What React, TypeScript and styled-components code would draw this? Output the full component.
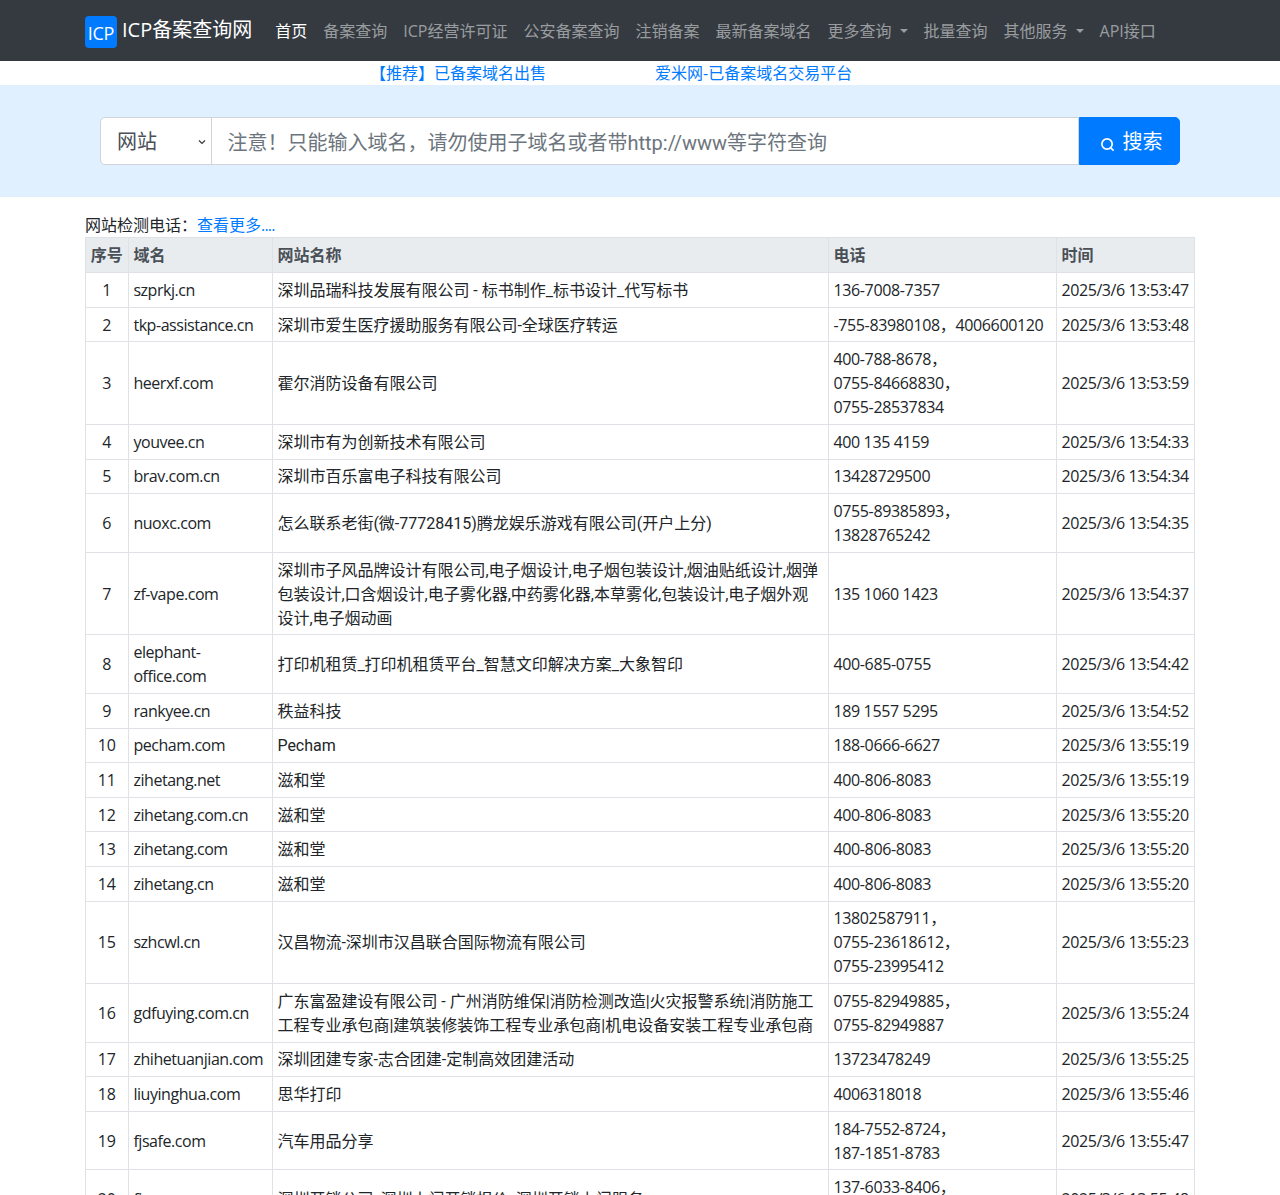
import React from "react";
import styled, { createGlobalStyle } from "styled-components";

const Global = createGlobalStyle`
  html, body { margin: 0; padding: 0; height: 1195px; overflow: hidden; background: #fff; }
  body {
    font-family: "Open Sans", "Noto Sans CJK SC", "Noto Sans", sans-serif;
    font-size: 16px; line-height: 24px; color: #212529;
  }
  * { box-sizing: border-box; }
`;

const NavBar = styled.nav`
  height: 61px; background: #343a40; padding: 0 85px;
  display: flex; align-items: center;
`;
const Brand = styled.a`
  display: flex; align-items: center; color: #fff; font-size: 20px; margin-right: 15px; height: 32px; flex: none; margin-top: 2px;
`;
const Logo = styled.span`
  width: 32px; height: 32px; border-radius: 4px; background: #007bff; color: #fff;
  display: flex; align-items: center; justify-content: center; font-size: 18px; margin-right: 5px; padding-top: 2px; letter-spacing: -0.3px;
`;
const BrandName = styled.span`
  margin-top: -4px;
`;
const NavItem = styled.a<{ $active?: boolean }>`
  padding: 0 8px; white-space: nowrap; flex: none; display: flex; align-items: center;
  color: ${(p) => (p.$active ? "#fff" : "rgba(255,255,255,.5)")};
`;
const Caret = styled.span`
  display: inline-block; margin-left: 8px; width: 0; height: 0;
  border-top: 4.8px solid currentColor; border-left: 4.8px solid transparent; border-right: 4.8px solid transparent;
`;
const Promo = styled.div`
  height: 24px; display: flex; padding-left: 370px; gap: 109px;
`;
const Link = styled.a`
  color: #007bff; text-decoration: none; white-space: nowrap;
`;
const Dots = styled.span`
  letter-spacing: -0.8px;
`;
const Hero = styled.section`
  height: 112px; background: #e0f0ff; padding: 32px 100px;
`;
const SearchGroup = styled.form`
  display: flex; height: 48px; width: 1080px;
`;
const SelectBox = styled.div`
  width: 112px; flex: none; background: #fff; border: 1px solid #ced4da; border-radius: 5px 0 0 5px;
  display: flex; align-items: center; justify-content: space-between; padding: 2px 5px 0 16px;
  font-size: 20px; color: #495057;
`;
const SearchInput = styled.input`
  flex: 1; min-width: 0; margin-left: -1px; border: 1px solid #ced4da; background: #fff; padding: 4px 16px 0 15.5px;
  font-family: Roboto, "Noto Sans CJK SC", sans-serif; font-size: 20px; outline: none;
  &::placeholder { color: #6c757d; opacity: 1; }
`;
const SearchButton = styled.button`
  width: 101px; flex: none; background: #007bff; border: 1px solid #007bff; border-radius: 0 5px 5px 0; color: #fff;
  font: inherit; font-size: 20px; display: flex; align-items: center; justify-content: center; gap: 8px; padding: 2px 0 0 3px;
`;
const Content = styled.main`
  padding: 16px 85px 0;
`;
const Caption = styled.div`
  height: 24px;
`;
const Table = styled.table`
  width: 1109px; table-layout: fixed; border-collapse: collapse;
`;
const Th = styled.th`
  background: #e9ecef; color: #495057; font-weight: 700; text-align: left;
  border: 1px solid #dee2e6; padding: 4.8px 4.8px 5.4px; line-height: 24px;
`;
const Td = styled.td<{ $center?: boolean }>`
  border: 1px solid #dee2e6; padding: 4.8px; vertical-align: middle; line-height: 24px;
  text-align: ${(p) => (p.$center ? "center" : "left")};
`;
const Domain = styled.span`
  letter-spacing: -0.45px;
`;
const SiteName = styled.div`
  font-family: Roboto, "Noto Sans CJK SC", sans-serif;
  padding-top: 1px; margin-bottom: -1px;
`;
const Phone = styled.span`
  white-space: nowrap; letter-spacing: -0.35px;
`;
const Stamp = styled.span`
  white-space: nowrap; letter-spacing: -0.4px;
`;

const rows: [string, string, string, string][] = [
  ["szprkj.cn", "深圳品瑞科技发展有限公司 - 标书制作_标书设计_代写标书", "136-7008-7357", "2025/3/6 13:53:47"],
  ["tkp-assistance.cn", "深圳市爱生医疗援助服务有限公司-全球医疗转运", "-755-83980108，4006600120", "2025/3/6 13:53:48"],
  ["heerxf.com", "霍尔消防设备有限公司", "400-788-8678，0755-84668830，0755-28537834", "2025/3/6 13:53:59"],
  ["youvee.cn", "深圳市有为创新技术有限公司", "400 135 4159", "2025/3/6 13:54:33"],
  ["brav.com.cn", "深圳市百乐富电子科技有限公司", "13428729500", "2025/3/6 13:54:34"],
  ["nuoxc.com", "怎么联系老街(微-77728415)腾龙娱乐游戏有限公司(开户上分)", "0755-89385893，13828765242", "2025/3/6 13:54:35"],
  ["zf-vape.com", "深圳市子风品牌设计有限公司,电子烟设计,电子烟包装设计,烟油贴纸设计,烟弹包装设计,口含烟设计,电子雾化器,中药雾化器,本草雾化,包装设计,电子烟外观设计,电子烟动画", "135 1060 1423", "2025/3/6 13:54:37"],
  ["elephant-office.com", "打印机租赁_打印机租赁平台_智慧文印解决方案_大象智印", "400-685-0755", "2025/3/6 13:54:42"],
  ["rankyee.cn", "秩益科技", "189 1557 5295", "2025/3/6 13:54:52"],
  ["pecham.com", "Pecham", "188-0666-6627", "2025/3/6 13:55:19"],
  ["zihetang.net", "滋和堂", "400-806-8083", "2025/3/6 13:55:19"],
  ["zihetang.com.cn", "滋和堂", "400-806-8083", "2025/3/6 13:55:20"],
  ["zihetang.com", "滋和堂", "400-806-8083", "2025/3/6 13:55:20"],
  ["zihetang.cn", "滋和堂", "400-806-8083", "2025/3/6 13:55:20"],
  ["szhcwl.cn", "汉昌物流-深圳市汉昌联合国际物流有限公司", "13802587911，0755-23618612，0755-23995412", "2025/3/6 13:55:23"],
  ["gdfuying.com.cn", "广东富盈建设有限公司 - 广州消防维保|消防检测改造|火灾报警系统|消防施工工程专业承包商|建筑装修装饰工程专业承包商|机电设备安装工程专业承包商", "0755-82949885，0755-82949887", "2025/3/6 13:55:24"],
  ["zhihetuanjian.com", "深圳团建专家-志合团建-定制高效团建活动", "13723478249", "2025/3/6 13:55:25"],
  ["liuyinghua.com", "思华打印", "4006318018", "2025/3/6 13:55:46"],
  ["fjsafe.com", "汽车用品分享", "184-7552-8724，187-1851-8783", "2025/3/6 13:55:47"],
  ["fjcs.com", "深圳开锁公司_深圳上门开锁报价_深圳开锁上门服务", "137-6033-8406，137-6033-8406", "2025/3/6 13:55:48"],
];

const phoneParts = (text: string) => {
  const parts = text.split("，");
  return parts.map((part, i) => (
    <React.Fragment key={i}>
      <Phone>{i < parts.length - 1 ? part + "，" : part}</Phone>
      {i < parts.length - 1 ? <wbr /> : null}
    </React.Fragment>
  ));
};

const SearchIcon = () => (
  <svg width="15" height="15" viewBox="0 0 16 16" fill="none" stroke="currentColor" strokeWidth="1.8" style={{ marginTop: 4 }}>
    <circle cx="7.5" cy="7.5" r="5.5" />
    <path d="M11.5 11.5 14.5 14.5" />
  </svg>
);

const Chevron = () => (
  <svg width="8" height="8" viewBox="0 0 8 8" fill="none" stroke="#343a40" strokeWidth="1.2">
    <path d="M1 2.5 4 5.5 7 2.5" />
  </svg>
);

export default function App() {
  return (
    <>
      <Global />
      <NavBar>
        <Brand>
          <Logo>ICP</Logo><BrandName>ICP备案查询网</BrandName>
        </Brand>
        <NavItem $active>首页</NavItem>
        <NavItem>备案查询</NavItem>
        <NavItem>ICP经营许可证</NavItem>
        <NavItem>公安备案查询</NavItem>
        <NavItem>注销备案</NavItem>
        <NavItem>最新备案域名</NavItem>
        <NavItem>更多查询<Caret /></NavItem>
        <NavItem>批量查询</NavItem>
        <NavItem>其他服务<Caret /></NavItem>
        <NavItem>API接口</NavItem>
      </NavBar>
      <Promo>
        <Link>【推荐】已备案域名出售</Link>
        <Link>爱米网-已备案域名交易平台</Link>
      </Promo>
      <Hero>
        <SearchGroup>
          <SelectBox>网站<Chevron /></SelectBox>
          <SearchInput placeholder="注意！只能输入域名，请勿使用子域名或者带http://www等字符查询" />
          <SearchButton type="button"><SearchIcon />搜索</SearchButton>
        </SearchGroup>
      </Hero>
      <Content>
        <Caption>网站检测电话：<Link>查看更多<Dots>....</Dots></Link></Caption>
        <Table>
          <colgroup>
            <col width="42.6" />
            <col width="144" />
            <col width="556" />
            <col width="228" />
            <col width="138.4" />
          </colgroup>
          <thead>
            <tr>
              <Th>序号</Th><Th>域名</Th><Th>网站名称</Th><Th>电话</Th><Th>时间</Th>
            </tr>
          </thead>
          <tbody>
            {rows.map((r, i) => (
              <tr key={i}>
                <Td $center>{i + 1}</Td>
                <Td><Domain>{r[0]}</Domain></Td>
                <Td><SiteName>{r[1]}</SiteName></Td>
                <Td>{phoneParts(r[2])}</Td>
                <Td><Stamp>{r[3]}</Stamp></Td>
              </tr>
            ))}
          </tbody>
        </Table>
      </Content>
    </>
  );
}
